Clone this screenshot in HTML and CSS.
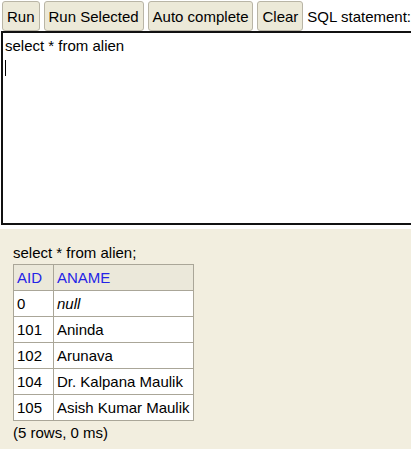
FILE: index.html
```html
<!DOCTYPE html>
<html>
<head>
<meta charset="utf-8">
<link rel="stylesheet" href="styles.css">
</head>
<body>
<div class="top">
  <div class="toolbar">
    <button class="btn">Run</button>
    <button class="btn">Run Selected</button>
    <button class="btn">Auto complete</button>
    <button class="btn">Clear</button>
    <span class="label">SQL statement:</span>
  </div>
  <div class="editor">select * from alien<br><span class="caret"></span></div>
</div>
<div class="result">
  <div class="query">select * from alien;</div>
  <table class="grid">
    <tr><th class="c1">AID</th><th>ANAME</th></tr>
    <tr><td class="c1">0</td><td><i>null</i></td></tr>
    <tr><td class="c1">101</td><td>Aninda</td></tr>
    <tr><td class="c1">102</td><td>Arunava</td></tr>
    <tr><td class="c1">104</td><td>Dr. Kalpana Maulik</td></tr>
    <tr><td class="c1">105</td><td>Asish Kumar Maulik</td></tr>
  </table>
  <div class="status">(5 rows, 0 ms)</div>
</div>
</body>
</html>
```
FILE: styles.css
```css
html, body {
  margin: 0;
  padding: 0;
  background: #f2eedf;
  font-family: "Liberation Sans", Arial, sans-serif;
  font-size: 15px;
  color: #000;
  overflow: hidden;
}
.top {
  background: #fff;
  padding-top: 1px;
  padding-bottom: 4px;
}
.toolbar {
  display: flex;
  align-items: center;
  gap: 4px;
  padding-left: 2px;
  height: 30px;
  white-space: nowrap;
}
.btn {
  font-family: "Liberation Sans", Arial, sans-serif;
  font-size: 15px;
  color: #000;
  background: #ece9d8;
  border: 1px solid #b9b5a6;
  border-radius: 3px;
  height: 30px;
  padding: 0 4px;
  margin: 0;
}
.editor {
  margin-left: 1px;
  width: 430px;
  border: 2px solid #111;
  background: #fff;
  padding: 4px 2px;
  line-height: 17px;
  box-sizing: border-box;
  height: 194px;
}
.caret {
  display: inline-block;
  width: 1px;
  height: 16px;
  background: #000;
  vertical-align: middle;
  margin-top: 6px;
}
.result {
  padding: 15px 13px 0;
}
.query {
  line-height: 18px;
  margin-bottom: 2px;
}
.grid {
  border-collapse: collapse;
  background: #fff;
}
.grid th, .grid td {
  border: 1px solid #aaa698;
  padding: 4px 3px;
  line-height: 17px;
  text-align: left;
  font-weight: normal;
  white-space: nowrap;
}
.grid th {
  background: #ebe8da;
  color: #2424e6;
}
.grid .c1 {
  width: 33px;
}
.status {
  margin-top: 3px;
  line-height: 18px;
}
```
